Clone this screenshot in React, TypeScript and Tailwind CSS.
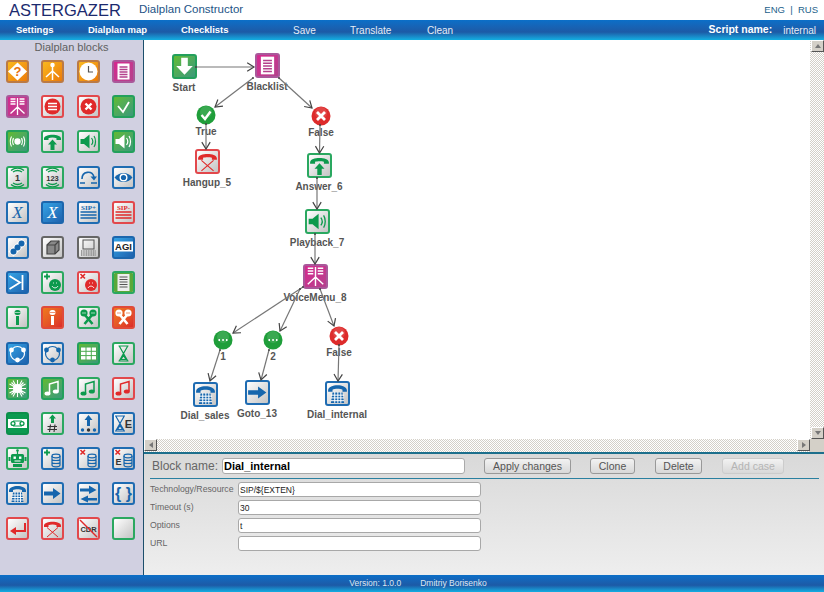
import React from 'react';

const B = '#1666ad';
const G = '#0d9a4d';
const R = '#e02a2a';
const W = '#ffffff';
const D = '#444444';

const solid = {
  orange: 'border-[#bb7a45] from-[#f9b81e] to-[#ec7a08]',
  magenta: 'border-[#a9589a] from-[#d6278f] to-[#b4408c]',
  green: 'border-[#23a05c] from-[#62ba2c] to-[#3b9978]',
  blue: 'border-[#1c66ad] from-[#35a4e6] to-[#1f62ae]',
  redfill: 'border-[#e04a3a] from-[#ee7a1c] to-[#dc2a2a]',
  dark: 'border-[#0b8f4a] from-[#0b9a50] to-[#0b9a50]',
  lgreen: 'border-[#2aa860] from-white to-[#c4c4c4]',
  lred: 'border-[#e2484c] from-white to-[#c4c4c4]',
  lblue: 'border-[#1f6cb2] from-white to-[#c4c4c4]',
  lgray: 'border-[#666666] from-white to-[#c4c4c4]',
};

type Tone = keyof typeof solid;

const Tile = ({ tone, size, children }: { tone: Tone; size: string; children?: React.ReactNode }) => (
  <div className={`${size} ${solid[tone]} border-2 rounded-[3px] bg-linear-to-br overflow-hidden`}>
    <svg viewBox="0 0 19 19" className="block w-full h-full">
      {children}
    </svg>
  </div>
);

const Handset = ({ c }: { c: string }) => (
  <path d="M1 6.5C1.5 1.5 17.5 1.5 18 6.5V8H13.5V6.2C11.5 5.4 7.5 5.4 5.5 6.2V8H1Z" fill={c} />
);

const UpArrow = ({ c }: { c: string }) => <path d="M9.5 7.5L14 12.5H11.5V18H7.5V12.5H5Z" fill={c} />;

const Speaker = ({ c }: { c: string }) => (
  <g>
    <path d="M1.5 7H5L10.5 2.5V16.5L5 12H1.5Z" fill={c} />
    <path d="M12.5 6C14 8 14 11 12.5 13M15 4C17 7 17 12 15 15" stroke={c} strokeWidth="1.2" fill="none" />
  </g>
);

const Waves = ({ label, size }: { label: string; size: number }) => (
  <g>
    <path d="M5 4C8 2 11 2 14 4M3 2.5C7 -0.5 12 -0.5 16 2.5M5 15C8 17 11 17 14 15M3 16.5C7 19.5 12 19.5 16 16.5" stroke={G} strokeWidth="1.3" fill="none" />
    <text x="9.5" y="13" textAnchor="middle" fontFamily="Liberation Sans" fontWeight="700" fontSize={size} fill="#333">{label}</text>
  </g>
);

const Music = ({ c }: { c: string }) => (
  <g>
    <path d="M6.5 14V5L15 2.5V12" stroke={c} strokeWidth="1.5" fill="none" />
    <ellipse cx="4.5" cy="14.5" rx="3" ry="2" fill={c} />
    <ellipse cx="12.8" cy="12.5" rx="3" ry="2" fill={c} />
  </g>
);

const Mic = ({ c, s }: { c: string; s: string }) => (
  <g>
    <rect x="6.5" y="2" width="6" height="5" rx="2.5" fill={c} />
    <path d="M6.5 4.5H12.5" stroke={s} strokeWidth="0.6" />
    <rect x="8" y="8" width="3" height="9" fill={c} />
  </g>
);

const CrossMic = ({ c, s }: { c: string; s: string }) => (
  <g>
    <path d="M6 7L13.5 16M13 7L5.5 16" stroke={c} strokeWidth="2.6" />
    <circle cx="5" cy="5" r="3.6" fill={c} />
    <circle cx="14" cy="5" r="3.6" fill={c} />
    <path d="M3 5H7M12 5H16" stroke={s} strokeWidth="0.6" />
  </g>
);

const Hourglass = ({ c }: { c: string }) => (
  <path d="M3 2H13M3 17H13M4 2.5L8 9.5L4 16.5M12 2.5L8 9.5L12 16.5M5.5 15.5H10.5L8 11.5Z" stroke={c} strokeWidth="1.2" fill="none" />
);

const Db = ({ c, x = 11 }: { c: string; x?: number }) => (
  <g fill="none" stroke={c} strokeWidth="1.2">
    <ellipse cx={x + 3} cy="7" rx="4" ry="1.8" />
    <path d={`M${x - 1} 7V16C${x - 1} 18.4 ${x + 7} 18.4 ${x + 7} 16V7M${x - 1} 10C${x - 1} 12 ${x + 7} 12 ${x + 7} 10M${x - 1} 13C${x - 1} 15 ${x + 7} 15 ${x + 7} 13`} />
  </g>
);

const Dial = () => (
  <g>
    <path d="M1 6.5C1.5 .5 17.5 .5 18 6.5V8H14V6C12 5 7 5 5 6V8H1Z" fill={B} />
    <path d="M5 8.5H14L15.5 18H3.5Z" fill={B} />
    <path d="M3.5 11H15.5M3.5 13.5H15.5M3.5 16H15.5M7 8V18M9.8 8V18M12.5 8V18" stroke={W} strokeWidth="0.9" />
  </g>
);

const Arrow = () => <path d="M1 7.5H10V4L17.5 9.5L10 15V11.5H1Z" fill={B} />;

const Txt = ({ t, x = 9.5, y, s, c, w = 700, f = 'Liberation Sans', i }: { t: string; x?: number; y: number; s: number; c: string; w?: number; f?: string; i?: boolean }) => (
  <text x={x} y={y} textAnchor="middle" fontFamily={f} fontWeight={w} fontSize={s} fontStyle={i ? 'italic' : 'normal'} fill={c}>{t}</text>
);

const DocLines = ({ c }: { c: string }) => (
  <g>
    <rect x="3.5" y="1.5" width="12" height="16" fill={W} />
    <path d="M5.5 5H13.5M5.5 7.5H13.5M5.5 10H13.5M5.5 12.5H13.5M5.5 15H13.5" stroke={c} strokeWidth="1.4" />
  </g>
);

const VoiceGlyph = () => (
  <path d="M2.5 2H7.5M2.5 4.5H7.5M2.5 7H7.5M11.5 2H16.5M11.5 4.5H16.5M11.5 7H16.5M9.5 1V18M9.5 10L2.5 16.5M9.5 10L16.5 16.5" stroke={W} strokeWidth="1.3" fill="none" />
);

const glyphs: { tone: Tone; g?: React.ReactNode }[] = [
  { tone: 'orange', g: <g><path d="M9.5 .5L19 9.5L9.5 18.5L0 9.5Z" fill={W} /><Txt t="?" y={14} s={13} c="#e8710c" /></g> },
  { tone: 'orange', g: <g stroke={W} strokeWidth="1.5" fill="none"><circle cx="9.5" cy="3" r="1.5" fill={W} /><path d="M9.5 4V18M9.5 9L3 15M9.5 9L16 15" /></g> },
  { tone: 'orange', g: <g><circle cx="9.5" cy="9.5" r="9" fill={W} /><path d="M9.5 4V10H14" stroke="#555" strokeWidth="1.2" fill="none" /></g> },
  { tone: 'magenta', g: <DocLines c="#b4408c" /> },

  { tone: 'magenta', g: <VoiceGlyph /> },
  { tone: 'lred', g: <g><circle cx="9.5" cy="9.5" r="8" fill={R} /><path d="M5 6.5H14M5 9.5H14M5 12.5H14" stroke={W} strokeWidth="1.6" /></g> },
  { tone: 'lred', g: <g><circle cx="9.5" cy="9.5" r="8" fill={R} /><path d="M6.5 6.5L12.5 12.5M12.5 6.5L6.5 12.5" stroke={W} strokeWidth="2.4" /></g> },
  { tone: 'green', g: <path d="M4 9L9 15L15 5" stroke={W} strokeWidth="1.8" fill="none" /> },

  { tone: 'green', g: <g stroke={W} strokeWidth="1.1" fill="none"><circle cx="9.5" cy="9.5" r="2.6" fill={W} /><path d="M5.5 6C4.5 8 4.5 11 5.5 13M3.5 4.5C2 7.5 2 11.5 3.5 14.5M13.5 6C14.5 8 14.5 11 13.5 13M15.5 4.5C17 7.5 17 11.5 15.5 14.5" /></g> },
  { tone: 'lgreen', g: <g><Handset c={G} /><UpArrow c={G} /></g> },
  { tone: 'lgreen', g: <Speaker c={G} /> },
  { tone: 'green', g: <Speaker c={W} /> },

  { tone: 'lgreen', g: <Waves label="1" size={9} /> },
  { tone: 'lgreen', g: <Waves label="123" size={7.5} /> },
  { tone: 'lblue', g: <g><path d="M3 11C3 3 13 2 15 9" stroke={B} strokeWidth="1.6" fill="none" /><path d="M11.5 8.5H18L15 12.5Z" fill={B} /><path d="M1 15H6M12 15H18" stroke={B} strokeWidth="1.6" /></g> },
  { tone: 'lblue', g: <g><path d="M.5 9.5C5 3.5 14 3.5 18.5 9.5C14 15.5 5 15.5 .5 9.5Z" fill={B} /><circle cx="9.5" cy="9.5" r="4" fill={W} /><circle cx="9.5" cy="9.5" r="2.6" fill={B} /></g> },

  { tone: 'lblue', g: <Txt t="X" y={15} s={17} c={B} w={400} f="Liberation Serif" i /> },
  { tone: 'blue', g: <Txt t="X" y={15} s={17} c={W} w={400} f="Liberation Serif" i /> },
  { tone: 'lblue', g: <g><Txt t="SIP+" y={6.5} s={7} c={B} f="Liberation Serif" /><path d="M1.5 9H17.5M1.5 12H17.5M1.5 15H17.5" stroke={B} strokeWidth="1.4" /></g> },
  { tone: 'lred', g: <g><Txt t="SIP-" y={6.5} s={7} c={R} f="Liberation Serif" /><path d="M1.5 9H17.5M1.5 12H17.5M1.5 15H17.5" stroke={R} strokeWidth="1.4" /></g> },

  { tone: 'lblue', g: <g><path d="M3 16L16 3" stroke={W} strokeWidth="7" /><circle cx="5.5" cy="13.5" r="3" fill={B} /><circle cx="9.5" cy="9.5" r="3" fill={B} /><circle cx="13.5" cy="5.5" r="3" fill={B} /></g> },
  { tone: 'lgray', g: <g fill="none" stroke="#444" strokeWidth="1.2"><path d="M4 7L8 3H16V12L12 16H4Z" fill="#888" /><path d="M4 7H12V16M12 7L16 3" /></g> },
  { tone: 'lgray', g: <g fill="none" stroke="#555" strokeWidth="1"><rect x="4" y="2" width="11" height="9" /><path d="M2 13H17M2 15H17M2 17H17" strokeDasharray="1 .7" /></g> },
  { tone: 'blue', g: <g><rect x="-1" y="3.5" width="21" height="10" fill={W} /><Txt t="AGI" y={12} s={9.5} c="#222" /></g> },

  { tone: 'blue', g: <path d="M1.5 3L12 9.5L1.5 16M14.5 2V17" stroke={W} strokeWidth="1.8" fill="none" /> },
  { tone: 'lgreen', g: <g><path d="M4 .5V6.5M1 3.5H7" stroke={G} strokeWidth="1.8" /><circle cx="12" cy="12" r="6" fill={G} /><path d="M9 13C10.5 15.5 13.5 15.5 15 13" stroke={W} strokeWidth="0.9" fill="none" /><path d="M10 10H10.8M13.2 10H14" stroke={W} /></g> },
  { tone: 'lred', g: <g><path d="M1.5 1L6 5.5M6 1L1.5 5.5" stroke={R} strokeWidth="1.6" /><circle cx="12" cy="12" r="6" fill={R} /><path d="M9 15C10.5 12.5 13.5 12.5 15 15" stroke={W} strokeWidth="0.9" fill="none" /><path d="M10 10H10.8M13.2 10H14" stroke={W} /></g> },
  { tone: 'lgreen', g: <g><rect x="-1" y="-1" width="21" height="21" fill="#5aa83a" /><rect x="3.5" y="1" width="12" height="17" fill="#eee" /><path d="M5.5 4H13.5M5.5 6.5H13.5M5.5 9H13.5M5.5 11.5H13.5M5.5 14H13.5" stroke="#555" strokeWidth="1.1" /></g> },

  { tone: 'lgreen', g: <Mic c={G} s={W} /> },
  { tone: 'redfill', g: <Mic c={W} s="#e05020" /> },
  { tone: 'lgreen', g: <CrossMic c={G} s={W} /> },
  { tone: 'redfill', g: <CrossMic c={W} s="#e05020" /> },

  { tone: 'blue', g: <g><circle cx="9.5" cy="9.5" r="7" fill="none" stroke={W} strokeWidth="1.2" /><circle cx="3.5" cy="6" r="2.4" fill={W} /><circle cx="15.5" cy="6" r="2.4" fill={W} /><circle cx="9.5" cy="16" r="2.4" fill={W} /></g> },
  { tone: 'lblue', g: <g><circle cx="9.5" cy="9.5" r="7" fill="none" stroke={B} strokeWidth="1.2" /><circle cx="3.5" cy="6" r="2.4" fill={B} /><circle cx="15.5" cy="6" r="2.4" fill={B} /><circle cx="9.5" cy="16" r="2.4" fill={B} /></g> },
  { tone: 'green', g: <path d="M1.5 3H17.5V16H1.5ZM1.5 7.3H17.5M1.5 11.6H17.5M7 3V16M12.3 3V16" stroke="#4caa50" strokeWidth="1" fill={W} /> },
  { tone: 'lgreen', g: <g transform="translate(1.5 0)"><Hourglass c={G} /></g> },

  { tone: 'green', g: <g stroke={W} strokeWidth="1.1"><circle cx="9.5" cy="9.5" r="4" fill={W} /><path d="M9.5 1V18M1 9.5H18M3.5 3.5L15.5 15.5M15.5 3.5L3.5 15.5M5 1.5L14 17.5M14 1.5L5 17.5M1.5 5L17.5 14M17.5 5L1.5 14" /></g> },
  { tone: 'green', g: <Music c={W} /> },
  { tone: 'lgreen', g: <Music c={G} /> },
  { tone: 'lred', g: <Music c={R} /> },

  { tone: 'dark', g: <g><rect x="-1" y="5" width="21" height="9" fill={W} /><circle cx="5" cy="9.5" r="2.6" fill={G} /><circle cx="14" cy="9.5" r="2.6" fill={G} /><path d="M5 7H14V12H5Z" fill="none" stroke={G} /><circle cx="5" cy="9.5" r="1.2" fill={W} /><circle cx="14" cy="9.5" r="1.2" fill={W} /></g> },
  { tone: 'lgreen', g: <g><path d="M9.5 .5L13 4.5H11V9H8V4.5H6Z" fill={G} /><path d="M7.5 10.5L6.5 18M12 10.5L11 18M4.5 12.5H14M4.5 15.5H14" stroke="#333" strokeWidth="1.1" /></g> },
  { tone: 'lblue', g: <g><path d="M9.5 1L13.5 6H11V12H8V6H5.5Z" fill={B} /><circle cx="3.5" cy="16" r="1.7" fill={B} /><circle cx="9.5" cy="16" r="1.7" fill="#333" /><circle cx="15.5" cy="16" r="1.7" fill={B} /></g> },
  { tone: 'lblue', g: <g><g transform="translate(-2 0)"><Hourglass c={B} /></g><Txt t="E" x={14.5} y={14} s={11} c="#333" /></g> },

  { tone: 'lgreen', g: <g fill={G}><path d="M9.5 1V5" stroke={G} strokeWidth="1.2" /><circle cx="9.5" cy="1.5" r="1.3" /><rect x="3" y="5" width="13" height="9" rx="1.5" /><rect x="0.5" y="8" width="2" height="4" /><rect x="16.5" y="8" width="2" height="4" /><rect x="5" y="15" width="9" height="3" /><rect x="5.5" y="7.5" width="2.4" height="2.4" fill={W} /><rect x="11" y="7.5" width="2.4" height="2.4" fill={W} /><path d="M6.5 12H12.5" stroke={W} /></g> },
  { tone: 'lblue', g: <g><path d="M4 .5V6.5M1 3.5H7" stroke={G} strokeWidth="1.8" /><Db c={B} x={10} /></g> },
  { tone: 'lblue', g: <g><path d="M1.5 1L6 5.5M6 1L1.5 5.5" stroke={R} strokeWidth="1.6" /><Db c={B} x={10} /></g> },
  { tone: 'lblue', g: <g><path d="M1.5 1L6 5.5M6 1L1.5 5.5" stroke={R} strokeWidth="1.6" /><Txt t="E" x={4.5} y={16} s={9} c="#333" /><Db c={B} x={11} /></g> },

  { tone: 'lblue', g: <Dial /> },
  { tone: 'lblue', g: <Arrow /> },
  { tone: 'lblue', g: <g><path d="M1 4.5H10V1.5L17.5 6L10 10V7.5H1Z" fill={B} /><path d="M18 14H9V11.5L1.5 15L9 18.5V16.5H18Z" fill={B} /></g> },
  { tone: 'lblue', g: <Txt t="{ }" y={15} s={16} c={B} /> },

  { tone: 'lred', g: <path d="M16 4V11H8V8L2 12L8 16V13H18V4Z" fill={R} /> },
  { tone: 'lred', g: <g><Handset c={R} /><path d="M4 8.5L15 18M15 8.5L4 18" stroke={R} strokeWidth="1" /></g> },
  { tone: 'lred', g: <g><Txt t="CDR" y={12.5} s={7.5} c="#333" /><path d="M1 1L18 18" stroke={R} strokeWidth="1.5" /></g> },
  { tone: 'lgreen' },
];

const Disc = ({ kind }: { kind: 'ok' | 'no' | 'more' }) => (
  <svg viewBox="0 0 20 20" className="block w-[20px] h-[20px] -mb-[2px]">
    <circle cx="10" cy="10" r="9.5" fill={kind === 'no' ? '#dd2b2b' : '#1f9e3a'} />
    <circle cx="10" cy="7" r="6" fill={W} opacity="0.12" />
    {kind === 'ok' && <path d="M5.5 10L9 14L14.5 6.5" stroke={W} strokeWidth="2.4" fill="none" />}
    {kind === 'no' && <path d="M6 6L14 14M14 6L6 14" stroke={W} strokeWidth="2.8" />}
    {kind === 'more' && <path d="M5.5 10H7M9.3 10H10.8M13 10H14.5" stroke={W} strokeWidth="2" />}
  </svg>
);

const big = 'w-[25px] h-[25px]';

// left/top are page coordinates of a node box 80px wide, icon centred in it
const nodes: { label: string; pos: string; icon: React.ReactNode }[] = [
  { label: 'Start', pos: 'left-[144px] top-[54px]', icon: <Tile tone="green" size={big}><path d="M6.5 1.5H12.5V9H17L9.5 17L2 9H6.5Z" fill={W} /></Tile> },
  { label: 'Blacklist', pos: 'left-[227px] top-[53px]', icon: <Tile tone="magenta" size={big}><DocLines c="#b4408c" /></Tile> },
  { label: 'True', pos: 'left-[166px] top-[105px]', icon: <Disc kind="ok" /> },
  { label: 'False', pos: 'left-[281px] top-[106px]', icon: <Disc kind="no" /> },
  { label: 'Hangup_5', pos: 'left-[167px] top-[149px]', icon: <Tile tone="lred" size={big}><Handset c={R} /><path d="M4 8.5L15 18M15 8.5L4 18" stroke={R} strokeWidth="1" /></Tile> },
  { label: 'Answer_6', pos: 'left-[279px] top-[153px]', icon: <Tile tone="lgreen" size={big}><Handset c={G} /><UpArrow c={G} /></Tile> },
  { label: 'Playback_7', pos: 'left-[277px] top-[209px]', icon: <Tile tone="lgreen" size={big}><Speaker c={G} /></Tile> },
  { label: 'VoiceMenu_8', pos: 'left-[275px] top-[264px]', icon: <Tile tone="magenta" size={big}><VoiceGlyph /></Tile> },
  { label: '1', pos: 'left-[183px] top-[330px]', icon: <Disc kind="more" /> },
  { label: '2', pos: 'left-[233px] top-[330px]', icon: <Disc kind="more" /> },
  { label: 'False', pos: 'left-[299px] top-[326px]', icon: <Disc kind="no" /> },
  { label: 'Dial_sales', pos: 'left-[165px] top-[382px]', icon: <Tile tone="lblue" size={big}><Dial /></Tile> },
  { label: 'Goto_13', pos: 'left-[217px] top-[380px]', icon: <Tile tone="lblue" size={big}><Arrow /></Tile> },
  { label: 'Dial_internal', pos: 'left-[297px] top-[381px]', icon: <Tile tone="lblue" size={big}><Dial /></Tile> },
];

const edges = [
  [196, 67, 254, 67],
  [253, 78, 215, 107],
  [279, 78, 312, 108],
  [206, 124, 206, 149],
  [320, 125, 319.5, 153],
  [317, 178, 317, 209],
  [315, 234, 315, 264],
  [303, 287, 233, 333],
  [300, 289, 280, 331],
  [320, 289, 334, 326],
  [220, 350, 210, 381],
  [269, 350, 261, 380],
  [339, 345, 338, 381],
];

const ScrollBtn = ({ d }: { d: string }) => (
  <div className="w-[13px] h-[12px] shrink-0 bg-[#d4d0c8] border border-t-white border-l-white border-r-[#555] border-b-[#555] flex items-center justify-center">
    <svg viewBox="0 0 8 8" className="w-[8px] h-[8px]"><path d={d} fill="#777" /></svg>
  </div>
);

const Field = ({ label, value }: { label: string; value: string }) => (
  <div className="flex items-center h-[15px] mb-[3px]">
    <span className="w-[88px] text-[8.7px] text-[#666]">{label}</span>
    <input readOnly value={value} className="w-[243px] h-[15px] px-px bg-white border border-[#a8a8a8] rounded-[3px] text-[8.5px] text-[#222] outline-none" />
  </div>
);

const PanelBtn = ({ children, w, off }: { children: string; w: string; off?: boolean }) => (
  <button className={`${w} h-[16px] rounded-[3px] border bg-linear-to-b from-[#f2f2f2] to-[#d8d8d8] text-[10.5px] leading-none ${off ? 'border-[#ccc] text-[#b4b4b4]' : 'border-[#999] text-[#555]'}`}>
    {children}
  </button>
);

const barBg = 'bg-linear-to-b from-[#0a6fc8] via-[#1c5aa6] via-60% to-[#12aee2]';

export default function App() {
  return (
    <div className="w-[824px] h-[592px] flex flex-col overflow-hidden bg-white font-['Liberation_Sans',Arial,sans-serif]">
      <header className="h-[20px] flex items-center pl-[9px] pr-[6px]">
        <span className="text-[16.5px] leading-none text-[#1b2a6e] w-[130px]">ASTERGAZER</span>
        <span className="text-[11.5px] text-[#1d5386]">Dialplan Constructor</span>
        <span className="ml-auto text-[9.5px] text-[#1d5f8c]">ENG&nbsp; |&nbsp; RUS</span>
      </header>

      <nav className={`h-[20px] flex items-center pl-[16px] pr-[8px] text-[10px] text-white ${barBg}`}>
        <a className="w-[72px] font-bold text-[9.5px]">Settings</a>
        <a className="w-[93px] font-bold text-[9.5px]">Dialplan map</a>
        <a className="w-[112px] font-bold text-[9.5px]">Checklists</a>
        <a className="w-[57px] text-[#e6edf5]">Save</a>
        <a className="w-[77px] text-[#e6edf5]">Translate</a>
        <a className="text-[#e6edf5]">Clean</a>
        <span className="ml-auto font-bold text-[10.5px] mr-[11px]">Script name:</span>
        <span className="text-[#e6edf5]">internal</span>
      </nav>

      <div className="flex-1 flex min-h-0">
        <aside className="w-[144px] shrink-0 bg-[#d1d0e1] border-r border-[#1c4f6c]">
          <h2 className="h-[20px] text-center text-[11px] leading-[15px] text-[#606060]">Dialplan blocks</h2>
          <div className="grid grid-cols-[repeat(4,23px)] gap-x-[12.3px] gap-y-[12.2px] pl-[6px]">
            {glyphs.map((b, i) => (
              <Tile key={i} tone={b.tone} size="w-[23px] h-[23px]">{b.g}</Tile>
            ))}
          </div>
        </aside>

        <main className="flex-1 flex flex-col min-w-0">
          <div className="h-[412px] flex flex-col">
            <div className="flex-1 flex min-h-0">
              <div className="flex-1 relative overflow-hidden">
                <div className="absolute -left-[144px] -top-[40px] w-[824px] h-[592px]">
                  {nodes.map((n, i) => (
                    <div key={i} className={`absolute w-[80px] flex flex-col items-center ${n.pos}`}>
                      {n.icon}
                      <span className="text-[10px] leading-[14px] mt-[2px] text-[#555] font-bold whitespace-nowrap">{n.label}</span>
                    </div>
                  ))}
                  <svg className="absolute left-0 top-0 w-[824px] h-[592px] pointer-events-none">
                    {edges.map(([x1, y1, x2, y2], i) => {
                      const a = Math.atan2(y2 - y1, x2 - x1);
                      const arm = (t: number) => `${x2 - 8 * Math.cos(a + t)} ${y2 - 8 * Math.sin(a + t)}`;
                      return (
                        <g key={i} fill="none">
                          <line x1={x1} y1={y1} x2={x2} y2={y2} stroke="#777" strokeWidth="1.2" />
                          <path d={`M${arm(0.55)}L${x2} ${y2}L${arm(-0.55)}`} stroke={D} strokeWidth="1.2" />
                          <circle cx={x1} cy={y1} r="1" fill={D} />
                        </g>
                      );
                    })}
                  </svg>
                </div>
              </div>
              <div className="w-[14px] flex flex-col items-end bg-[repeating-conic-gradient(#d4d0c8_0_25%,#fff_0_50%)] bg-size-[2px_2px]">
                <ScrollBtn d="M4 2L7 6H1Z" />
                <div className="flex-1" />
                <ScrollBtn d="M4 6L1 2H7Z" />
              </div>
            </div>
            <div className="h-[13px] flex shrink-0">
              <div className="flex-1 flex justify-between bg-[repeating-conic-gradient(#d4d0c8_0_25%,#fff_0_50%)] bg-size-[2px_2px]">
                <ScrollBtn d="M2 4L6 1V7Z" />
                <ScrollBtn d="M6 4L2 7V1Z" />
              </div>
              <div className="w-[14px] bg-[#d4d0c8]" />
            </div>
          </div>

          <section className="flex-1 border-t-2 border-[#1c6f8c] bg-linear-to-b from-[#d9d9d9] to-[#eeeeee] pl-[6px] pr-[5px]">
            <div className="h-[25px] flex items-center border-b border-[#2a80a0] pl-[2px]">
              <span className="w-[70px] text-[12px] text-[#666]">Block name:</span>
              <input readOnly value="Dial_internal" className="w-[243px] h-[16px] px-[1px] bg-white border border-[#aaa] rounded-[3px] text-[11px] font-bold text-black outline-none" />
              <div className="w-[19px]" />
              <PanelBtn w="w-[87px]">Apply changes</PanelBtn>
              <div className="w-[19px]" />
              <PanelBtn w="w-[45px]">Clone</PanelBtn>
              <div className="w-[20px]" />
              <PanelBtn w="w-[47px]">Delete</PanelBtn>
              <div className="w-[20px]" />
              <PanelBtn w="w-[62px]" off>Add case</PanelBtn>
            </div>
            <div className="pt-[3px]">
              <Field label="Technology/Resource" value="SIP/${EXTEN}" />
              <Field label="Timeout (s)" value="30" />
              <Field label="Options" value="t" />
              <Field label="URL" value="" />
            </div>
          </section>
        </main>
      </div>

      <footer className={`h-[17px] flex items-center justify-center gap-[19px] text-[8.5px] text-[#dfe7f0] pl-[12px] ${barBg}`}>
        <span>Version: 1.0.0</span>
        <span>Dmitriy Borisenko</span>
      </footer>
    </div>
  );
}
